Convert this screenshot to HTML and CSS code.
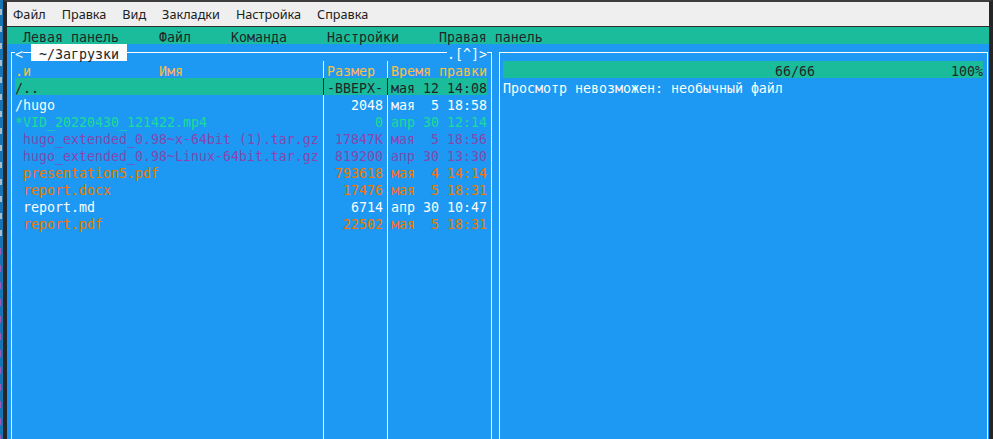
FILE: index.html
```html
<!DOCTYPE html>
<html lang="ru">
<head>
<meta charset="utf-8">
<title>mc</title>
<link rel="stylesheet" href="styles.css">
</head>
<body>
<div class="screen">
  <div class="strip"><div class="strip-top"></div><div class="strip-bot"></div></div>
  <div class="window">
    <nav class="menubar">
      <span class="mi">Файл</span>
      <span class="mi">Правка</span>
      <span class="mi">Вид</span>
      <span class="mi">Закладки</span>
      <span class="mi">Настройка</span>
      <span class="mi">Справка</span>
    </nav>
    <div class="term">
      <div class="mcmenu">
        <span>Левая панель</span><span>Файл</span><span>Команда</span><span>Настройки</span><span>Правая панель</span>
      </div>
      <div class="panels">
        <section class="panel left">
          <div class="ptop">
            <span class="corner-l"></span>
            <span class="ch">&lt;</span>
            <span class="hline w1"></span>
            <span class="ptitle"> ~/Загрузки </span>
            <span class="hline grow"></span>
            <span class="ptail">.[^]&gt;</span>
            <span class="corner-r"></span>
          </div>
          <div class="pbody">
            <div class="row head">
              <span class="name"><span>.и</span><span class="hname">Имя</span></span>
              <span class="sep"></span>
              <span class="size left">Размер</span>
              <span class="sep"></span>
              <span class="time">Время правки</span>
            </div>
            <div class="row sel">
              <span class="name">/..</span><span class="sep"></span><span class="size">-ВВЕРХ-</span><span class="sep"></span><span class="time">мая 12 14:08</span>
            </div>
            <div class="row dir">
              <span class="name">/hugo</span><span class="sep"></span><span class="size">2048</span><span class="sep"></span><span class="time">мая  5 18:58</span>
            </div>
            <div class="row exe">
              <span class="name">*VID_20220430_121422.mp4</span><span class="sep"></span><span class="size">0</span><span class="sep"></span><span class="time">апр 30 12:14</span>
            </div>
            <div class="row arch">
              <span class="name"> hugo_extended_0.98~x-64bit (1).tar.gz</span><span class="sep"></span><span class="size">17847K</span><span class="sep"></span><span class="time">мая  5 18:56</span>
            </div>
            <div class="row arch">
              <span class="name"> hugo_extended_0.98~Linux-64bit.tar.gz</span><span class="sep"></span><span class="size">819200</span><span class="sep"></span><span class="time">апр 30 13:30</span>
            </div>
            <div class="row doc">
              <span class="name"> presentation5.pdf</span><span class="sep"></span><span class="size">793618</span><span class="sep"></span><span class="time">мая  4 14:14</span>
            </div>
            <div class="row doc">
              <span class="name"> report.docx</span><span class="sep"></span><span class="size">17476</span><span class="sep"></span><span class="time">мая  5 18:31</span>
            </div>
            <div class="row reg">
              <span class="name"> report.md</span><span class="sep"></span><span class="size">6714</span><span class="sep"></span><span class="time">апр 30 10:47</span>
            </div>
            <div class="row doc">
              <span class="name"> report.pdf</span><span class="sep"></span><span class="size">22502</span><span class="sep"></span><span class="time">мая  5 18:31</span>
            </div>
            <div class="row fill">
              <span class="name"></span><span class="sep"></span><span class="size"></span><span class="sep"></span><span class="time"></span>
            </div>
          </div>
        </section>
        <section class="panel right">
          <div class="ptop">
            <span class="corner-l"></span>
            <span class="hline grow"></span>
            <span class="corner-r"></span>
          </div>
          <div class="pbody">
            <div class="qbar"><span>66/66</span><span>100%</span></div>
            <div class="qmsg">Просмотр невозможен: необычный файл</div>
          </div>
        </section>
      </div>
    </div>
  </div>
</div>
</body>
</html>
```
FILE: styles.css
```css
html, body {
  margin: 0;
  padding: 0;
  background: #232627;
}

.screen {
  display: flex;
  width: 993px;
  height: 439px;
  overflow: hidden;
}

/* sliver of another window at the far left */
.strip {
  width: 3px;
  flex: none;
  display: flex;
  flex-direction: column;
  background: #1674b2;
}
.strip-top {
  width: 2px;
  height: 240px;
  background: repeating-linear-gradient(to bottom, transparent 0 9px, #aebbc4 9px 15px, transparent 15px 17px);
}
.strip-bot {
  width: 1px;
  flex: 1;
  background: repeating-linear-gradient(to bottom, transparent 0 8px, #9b59b6 8px 15px, transparent 15px 17px);
}

.window {
  flex: 1;
  min-width: 0;
  display: flex;
  flex-direction: column;
  border-top: 2px solid #3d3d3d;
  border-left: 4px solid #262626;
  border-right: 4px solid #262626;
}

.menubar {
  flex: none;
  height: 24px;
  background: #efefef;
  border-bottom: 1px solid #2f2f2f;
  display: flex;
  align-items: center;
  gap: 16px;
  padding-left: 6px;
  font-family: "Noto Sans", sans-serif;
  font-size: 12.67px;
  color: #202020;
}

.term {
  flex: 1;
  min-height: 0;
  overflow: hidden;
  display: flex;
  flex-direction: column;
  background: #1d99f3;
  color: #fcfcfc;
  font-family: "DejaVu Sans Mono", monospace;
  font-size: 13.29px;
  /* cells are 17px tall; the taller line box lowers the baseline to match the terminal */
  line-height: 21px;
}

.mcmenu {
  flex: none;
  height: 17px;
  display: flex;
  gap: 40px;
  padding-left: 16px;
  background: #1abc9c;
  color: #232627;
  white-space: pre;
}

.panels {
  flex: 1;
  min-height: 0;
  display: flex;
}

.panel {
  flex: none;
  display: flex;
  flex-direction: column;
}
.panel.left { width: 488px; }
.panel.right { width: 496px; }

.ptop {
  flex: none;
  height: 17px;
  display: flex;
  white-space: pre;
}
.corner-l {
  flex: none;
  width: 3px;
  margin: 8px 0 0 4px;
  border-left: 1px solid #fcfcfc;
  border-top: 1px solid #fcfcfc;
}
.corner-r {
  flex: none;
  width: 4px;
  margin: 8px 3px 0 0;
  border-right: 1px solid #fcfcfc;
  border-top: 1px solid #fcfcfc;
}
.hline {
  background: linear-gradient(#fcfcfc, #fcfcfc) no-repeat 0 8px / 100% 1px;
}
.hline.w1 { width: 8px; flex: none; }
.hline.grow { flex: 1; }
.ch { width: 8px; flex: none; }
.ptitle {
  background: #fcfcfc;
  color: #232627;
}

.pbody {
  flex: 1;
  display: flex;
  flex-direction: column;
  margin: 0 3px 0 4px;
  padding: 0 4px 0 3px;
  border-left: 1px solid #fcfcfc;
  border-right: 1px solid #fcfcfc;
}

.row {
  flex: none;
  height: 17px;
  display: grid;
  grid-template-columns: 304px 8px 56px 8px 96px;
  white-space: pre;
}
.row.fill { flex: 1; height: auto; }

.sep {
  background: linear-gradient(#fcfcfc, #fcfcfc) no-repeat 4px 0 / 1px 100%;
}
.size { text-align: right; }
.size.left { text-align: left; }

.head { color: #fdbc4b; }
.head .name { display: flex; }
.hname { margin-left: 128px; }

.sel { background: #1abc9c; color: #232627; }
.sel .sep {
  background: linear-gradient(#232627, #232627) no-repeat 4px 0 / 1px 100%;
}
.dir, .reg { color: #fcfcfc; }
.exe { color: #1cdc9a; }
.arch { color: #8e44ad; }
.doc { color: #f67400; }

.qbar {
  flex: none;
  height: 17px;
  display: flex;
  justify-content: space-between;
  padding-left: 272px;
  background: #1abc9c;
  color: #232627;
}
.qmsg { flex: none; height: 17px; white-space: pre; }
```
